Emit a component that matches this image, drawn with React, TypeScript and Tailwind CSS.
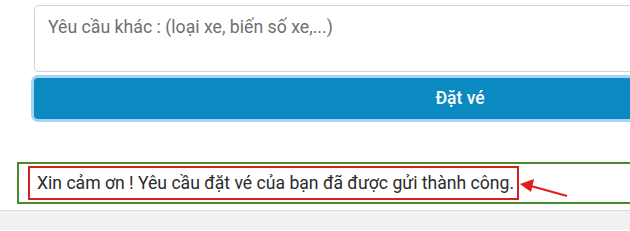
export default function App() {
  return (
    <div
      className="relative w-[630px] h-[231px] overflow-hidden bg-white"
      style={{ fontFamily: 'Roboto, "Noto Sans", sans-serif' }}
    >
      {/* form */}
      <div className="w-[886px] pl-[34px] pt-[5px]">
        <div className="h-[67px] rounded-[4px] border border-[#d4d4d4] px-[13px] pt-[10px] text-[17.7px] leading-[22px] text-[#6f6f6f]">
          Yêu cầu khác : (loại xe, biến số xe,...)
        </div>
        <div className="mt-[6px] h-[41px] rounded-[4px] bg-[#0a8ac0] ring-[3px] ring-[#a8d2f6] flex items-center justify-center text-[17.5px] font-medium text-white">
          Đặt vé
        </div>
      </div>

      {/* thông báo */}
      <div className="mt-[43px] ml-[17px] w-[700px] h-[42px] border-2 border-[#4b8a2b] flex items-center pl-[9px]">
        <div className="h-[34px] border-2 border-[#d42020] flex items-center pl-[7px] pr-[3px] text-[17.6px] text-[#2b2b2b]">
          Xin cảm ơn ! Yêu cầu đặt vé của bạn đã được gửi thành công.
        </div>
      </div>

      {/* mũi tên chú thích */}
      <svg className="absolute left-[517px] top-[176px]" width="56" height="24" viewBox="0 0 56 24">
        <line x1="50" y1="20" x2="14" y2="10" stroke="#e31b1b" strokeWidth="2" />
        <polygon points="3,8 17,3 14,16" fill="#e31b1b" />
      </svg>

      <div className="mt-[6px] h-[20px] border-t border-[#dcdcdc] bg-[#f1f1f1]" />
    </div>
  );
}
